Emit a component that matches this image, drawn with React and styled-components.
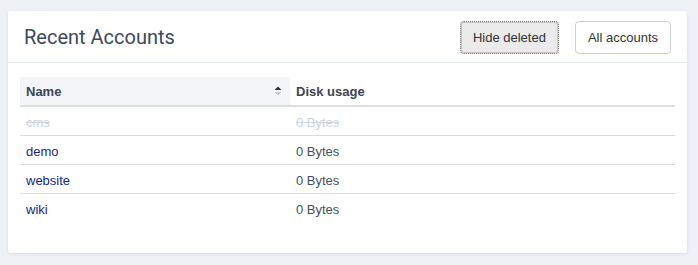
import React from "react";
import styled, { createGlobalStyle } from "styled-components";

const GlobalStyle = createGlobalStyle`
  body {
    margin: 0;
    background: #eef1f6;
    font-family: "Liberation Sans", Arial, sans-serif;
  }
`;

const Page = styled.div`
  padding: 11px 11px 12px 8px;
`;

const Card = styled.div`
  background: #ffffff;
  border-radius: 3px;
  box-shadow: 0 1px 3px rgba(60, 80, 120, 0.12);
  height: 242px;
  box-sizing: border-box;
`;

const Header = styled.div`
  display: flex;
  align-items: center;
  justify-content: space-between;
  height: 52px;
  padding: 0 16px;
  border-bottom: 1px solid #e3e7ee;
  box-sizing: border-box;
`;

const Title = styled.h2`
  margin: 0;
  font-family: Roboto, "Liberation Sans", sans-serif;
  font-weight: 400;
  font-size: 20px;
  color: #3e495b;
`;

const Actions = styled.div`
  display: flex;
  gap: 16px;
  padding-top: 1px;
`;

const Button = styled.button`
  height: 33px;
  padding: 0 12px;
  font-family: "Liberation Sans", Arial, sans-serif;
  font-size: 13px;
  color: #333;
  border-radius: 4px;
  background: ${(p) => (p.$active ? "#ebebeb" : "#ffffff")};
  border: 1px ${(p) => (p.$active ? "dotted #777" : "solid #cfcfcf")};
  box-shadow: ${(p) => (p.$active ? "inset 0 0 0 1px #c4c4c4" : "none")};
`;

const Body = styled.div`
  padding: 14px 12px 0;
`;

const Table = styled.table`
  width: 100%;
  border-collapse: collapse;
  font-size: 13px;
`;

const Th = styled.th`
  text-align: left;
  font-weight: 700;
  color: #3c4556;
  height: 28px;
  padding: 0 6px;
  border-bottom: 2px solid #dedede;
  background: ${(p) => (p.$sorted ? "#f3f5f8" : "transparent")};
  width: ${(p) => p.$w || "auto"};
`;

const HeadInner = styled.div`
  display: flex;
  align-items: center;
  justify-content: space-between;
`;

const Td = styled.td`
  height: 26px;
  padding: 2px 5px 0 6px;
  border-bottom: ${(p) => (p.$last ? "none" : "1px solid #dcdcdc")};
  color: ${(p) => (p.$deleted ? "#cdd3db" : p.$link ? "#221f78" : "#464f5e")};
  text-decoration: ${(p) => (p.$deleted ? "line-through" : "none")};
`;

const SortIcon = () => (
  <svg width="8" height="10" viewBox="0 0 8 10" style={{ marginRight: 2 }}>
    <path d="M0.5 4 L4 0.5 L7.5 4 Z" fill="#2b2f36" />
    <path d="M0.5 6 L4 9.5 L7.5 6 Z" fill="#c4c8ce" />
  </svg>
);

const accounts = [
  { name: "cms", usage: "0 Bytes", deleted: true },
  { name: "demo", usage: "0 Bytes" },
  { name: "website", usage: "0 Bytes" },
  { name: "wiki", usage: "0 Bytes" },
];

export default function App() {
  return (
    <>
      <GlobalStyle />
      <Page>
        <Card>
          <Header>
            <Title>Recent Accounts</Title>
            <Actions>
              <Button $active>Hide deleted</Button>
              <Button>All accounts</Button>
            </Actions>
          </Header>
          <Body>
            <Table>
              <thead>
                <tr>
                  <Th $sorted $w="258px">
                    <HeadInner>
                      Name
                      <SortIcon />
                    </HeadInner>
                  </Th>
                  <Th>Disk usage</Th>
                </tr>
              </thead>
              <tbody>
                {accounts.map((a, i) => (
                  <tr key={a.name}>
                    <Td $link $deleted={a.deleted} $last={i === accounts.length - 1}>
                      {a.name}
                    </Td>
                    <Td $deleted={a.deleted} $last={i === accounts.length - 1}>
                      {a.usage}
                    </Td>
                  </tr>
                ))}
              </tbody>
            </Table>
          </Body>
        </Card>
      </Page>
    </>
  );
}
